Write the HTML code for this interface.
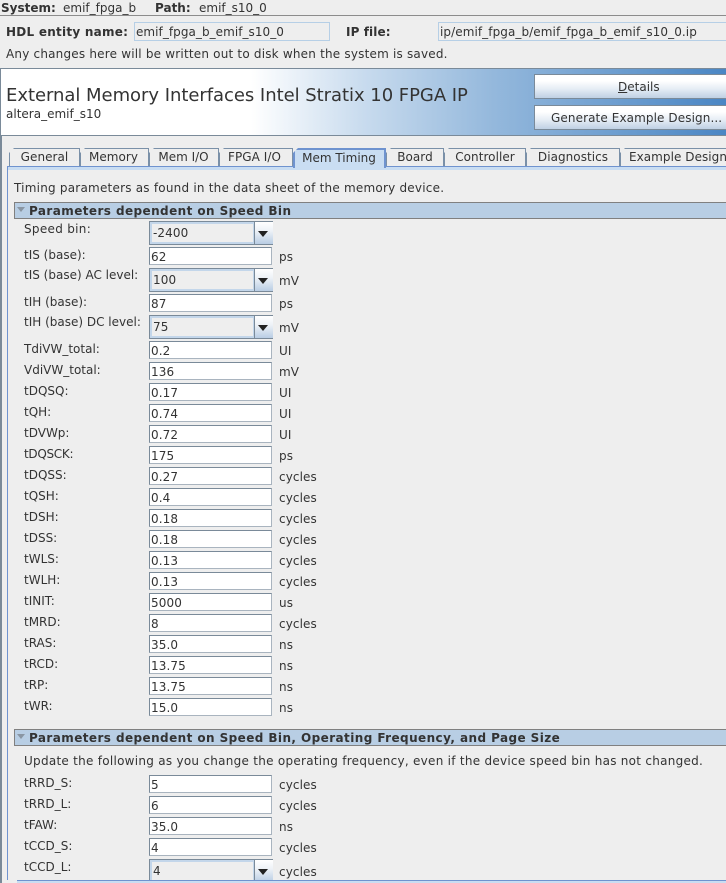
<!DOCTYPE html>
<html><head><meta charset="utf-8"><style>
html,body{margin:0;padding:0}
body{width:726px;height:883px;overflow:hidden;background:#eee;position:relative;font:12px/14px "DejaVu Sans","Liberation Sans",sans-serif;color:#333}
div{position:absolute;white-space:nowrap;box-sizing:border-box}
.t{line-height:14px}
.b{font-weight:bold}
.l{left:24px;line-height:14px}
.u{left:279px;line-height:14px;letter-spacing:.1px}
.f{left:149px;width:123px;height:18px;background:#fff;border:1px solid #7a8a99;border-bottom-color:#a9b4bf;border-right-color:#a9b4bf;padding-left:1px;line-height:18px;font-size:12px;letter-spacing:.1px}
.c{left:149px;width:124px;height:24px;background:#eee;border:1px solid #7a8a99;}
.c i{position:absolute;left:0;top:0;width:104px;height:22px;border:2px solid #c3d6ea;border-right:1px solid #c3d6ea;box-sizing:border-box;font-style:normal;font-size:12px;letter-spacing:.1px;line-height:19px;padding-left:1px}
.c b{position:absolute;left:104px;top:0;width:18px;height:22px;border-left:1px solid #7a8a99;background:linear-gradient(#fff,#eef2f7 40%,#b9cde4)}
.c b:after{content:"";position:absolute;left:3px;top:9px;border:5px solid transparent;border-top:6px solid #222;border-bottom:0}
.tab{top:148px;height:18px;background:#eee;border:1px solid #7a90a8;border-bottom:0;text-align:center;line-height:17px;letter-spacing:.05px;clip-path:polygon(5px 0,100% 0,100% 100%,0 100%,0 5px)}
.h{left:14px;width:712px;height:17px;background:#b8cee4;border:1px solid #808080;border-right:0;font-weight:bold;line-height:16px;padding-left:14px;font-size:12px;letter-spacing:.42px}
.tri{position:absolute;left:2px;top:4px;border:4px solid transparent;border-top:5px solid #8a96a3;border-bottom:0}
.btn{left:534px;width:192px;height:25px;border:1px solid #7a8a99;border-right:0;background:linear-gradient(#fff,#fff 25%,#e6edf5 60%,#bfd0e4);line-height:24px;font-size:12px}
</style></head><body>
<div class="t b" style="left:1px;top:1px">System:</div>
<div class="t" style="left:63px;top:1px">emif_fpga_b</div>
<div class="t b" style="left:155px;top:1px">Path:</div>
<div class="t" style="left:199px;top:1px">emif_s10_0</div>
<div style="left:0;top:15px;width:726px;height:1px;background:#8c8c8c"></div>
<div class="t b" style="left:6px;top:25px;letter-spacing:.25px">HDL entity name:</div>
<div style="left:134px;top:22px;width:196px;height:19px;border:1px solid #b6cfe6;line-height:18px;padding-left:1px;letter-spacing:.05px">emif_fpga_b_emif_s10_0</div>
<div class="t b" style="left:346px;top:25px;letter-spacing:.1px">IP file:</div>
<div style="left:438px;top:22px;width:288px;height:19px;border:1px solid #b6cfe6;border-right:0;line-height:18px;padding-left:1px;letter-spacing:.08px">ip/emif_fpga_b/emif_fpga_b_emif_s10_0.ip</div>
<div class="t" style="left:6px;top:47px;letter-spacing:.2px">Any changes here will be written out to disk when the system is saved.</div>

<div style="left:0;top:68px;width:726px;height:68px;border-top:1px solid #7a8a99;border-bottom:1px solid #7a8a99;border-left:1px solid #7a8a99;background:linear-gradient(90deg,#fff 0,#fff 250px,#c8dbee 363px,#94b8dc 493px,#4a86c4 726px)"></div>
<div style="left:6px;top:85px;font-size:18px;line-height:22px;color:#333;letter-spacing:-.04px">External Memory Interfaces Intel Stratix 10 FPGA IP</div>
<div class="t" style="left:6px;top:107px">altera_emif_s10</div>
<div class="btn" style="top:74px;padding-left:83px"><u>D</u>etails</div>
<div class="btn" style="top:105px;padding-left:16px;letter-spacing:.1px">Generate Example Design...</div>

<div style="left:0;top:136px;width:2px;height:747px;background:#7a8a99"></div>
<div style="left:7px;top:166px;width:719px;height:714px;border-left:1px solid #6f93cf"></div>
<div style="left:8px;top:166px;width:718px;height:4px;background:#c9ddf2;border-top:1px solid #6f93cf"></div>

<div class="tab" style="left:9px;width:71px">General</div>
<div class="tab" style="left:80px;width:69px;padding-right:2px">Memory</div>
<div class="tab" style="left:149px;width:70px;letter-spacing:0;padding-right:1px">Mem I/O</div>
<div class="tab" style="left:219px;width:74px;padding-right:3px">FPGA I/O</div>
<div class="tab" style="left:293px;width:93px;top:148px;height:20px;background:#c9ddf2;border:2px solid #6f93cf;border-bottom:0;line-height:16px;letter-spacing:0;padding-right:1px">Mem Timing</div>
<div class="tab" style="left:386px;width:58px">Board</div>
<div class="tab" style="left:444px;width:82px">Controller</div>
<div class="tab" style="left:526px;width:94px">Diagnostics</div>
<div class="tab" style="left:620px;width:120px;text-align:left;padding-left:8px">Example Design</div>

<div class="t" style="left:14px;top:181px;letter-spacing:.22px">Timing parameters as found in the data sheet of the memory device.</div>
<div class="h" style="top:202px"><span class="tri"></span>Parameters dependent on Speed Bin</div>

<div class="l" style="top:222px;letter-spacing:.3px">Speed bin:</div><div class="c" style="top:221px"><i>-2400</i><b></b></div>
<div class="l" style="top:248px">tIS (base):</div><div class="f" style="top:247px">62</div><div class="u" style="top:250px">ps</div>
<div class="l" style="top:268px">tIS (base) AC level:</div><div class="c" style="top:268px"><i>100</i><b></b></div><div class="u" style="top:274px">mV</div>
<div class="l" style="top:295px">tIH (base):</div><div class="f" style="top:294px">87</div><div class="u" style="top:297px">ps</div>
<div class="l" style="top:315px">tIH (base) DC level:</div><div class="c" style="top:315px"><i>75</i><b></b></div><div class="u" style="top:321px">mV</div>
<div class="l" style="top:342px">TdiVW_total:</div><div class="f" style="top:341px">0.2</div><div class="u" style="top:344px">UI</div>
<div class="l" style="top:363px">VdiVW_total:</div><div class="f" style="top:362px">136</div><div class="u" style="top:365px">mV</div>
<div class="l" style="top:384px">tDQSQ:</div><div class="f" style="top:383px">0.17</div><div class="u" style="top:386px">UI</div>
<div class="l" style="top:405px">tQH:</div><div class="f" style="top:404px">0.74</div><div class="u" style="top:407px">UI</div>
<div class="l" style="top:426px">tDVWp:</div><div class="f" style="top:425px">0.72</div><div class="u" style="top:428px">UI</div>
<div class="l" style="top:447px;letter-spacing:-.3px">tDQSCK:</div><div class="f" style="top:446px">175</div><div class="u" style="top:449px">ps</div>
<div class="l" style="top:468px">tDQSS:</div><div class="f" style="top:467px">0.27</div><div class="u" style="top:470px">cycles</div>
<div class="l" style="top:489px">tQSH:</div><div class="f" style="top:488px">0.4</div><div class="u" style="top:491px">cycles</div>
<div class="l" style="top:510px">tDSH:</div><div class="f" style="top:509px">0.18</div><div class="u" style="top:512px">cycles</div>
<div class="l" style="top:531px">tDSS:</div><div class="f" style="top:530px">0.18</div><div class="u" style="top:533px">cycles</div>
<div class="l" style="top:552px">tWLS:</div><div class="f" style="top:551px">0.13</div><div class="u" style="top:554px">cycles</div>
<div class="l" style="top:573px">tWLH:</div><div class="f" style="top:572px">0.13</div><div class="u" style="top:575px">cycles</div>
<div class="l" style="top:594px">tINIT:</div><div class="f" style="top:593px">5000</div><div class="u" style="top:596px">us</div>
<div class="l" style="top:615px">tMRD:</div><div class="f" style="top:614px">8</div><div class="u" style="top:617px">cycles</div>
<div class="l" style="top:636px">tRAS:</div><div class="f" style="top:635px">35.0</div><div class="u" style="top:638px">ns</div>
<div class="l" style="top:657px">tRCD:</div><div class="f" style="top:656px">13.75</div><div class="u" style="top:659px">ns</div>
<div class="l" style="top:678px">tRP:</div><div class="f" style="top:677px">13.75</div><div class="u" style="top:680px">ns</div>
<div class="l" style="top:699px">tWR:</div><div class="f" style="top:698px">15.0</div><div class="u" style="top:701px">ns</div>

<div class="h" style="top:729px"><span class="tri"></span>Parameters dependent on Speed Bin, Operating Frequency, and Page Size</div>
<div class="l" style="top:754px;letter-spacing:.27px">Update the following as you change the operating frequency, even if the device speed bin has not changed.</div>
<div class="l" style="top:776px">tRRD_S:</div><div class="f" style="top:775px">5</div><div class="u" style="top:778px">cycles</div>
<div class="l" style="top:797px">tRRD_L:</div><div class="f" style="top:796px">6</div><div class="u" style="top:799px">cycles</div>
<div class="l" style="top:818px">tFAW:</div><div class="f" style="top:817px">35.0</div><div class="u" style="top:820px">ns</div>
<div class="l" style="top:839px">tCCD_S:</div><div class="f" style="top:838px">4</div><div class="u" style="top:841px">cycles</div>
<div class="l" style="top:860px">tCCD_L:</div><div class="c" style="top:859px"><i>4</i><b></b></div><div class="u" style="top:865px">cycles</div>
<div style="left:0;top:880px;width:726px;height:3px;background:#eee"></div>
<div style="left:0;top:880px;width:2px;height:3px;background:#7a8a99"></div>
<div style="left:17px;top:880px;width:709px;height:3px;background:#c9ddf2;border-top:1px solid #6f93cf"></div>
</body></html>
